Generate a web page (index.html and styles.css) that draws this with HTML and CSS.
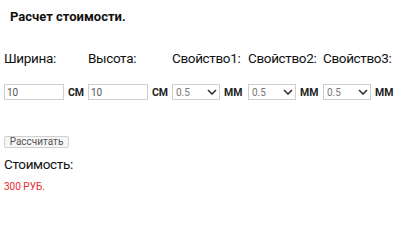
FILE: index.html
```html
<!DOCTYPE html>
<html lang="ru">
<head>
<meta charset="utf-8">
<link rel="stylesheet" href="styles.css">
</head>
<body>
<div class="page">
  <div class="title">Расчет стоимости.</div>
  <div class="calc">
    <div class="label">Ширина:</div>
    <div class="label">Высота:</div>
    <div class="label">Свойство1:</div>
    <div class="label">Свойство2:</div>
    <div class="label">Свойство3:</div>

    <div class="cell"><input class="num" type="text" value="10"><span class="unit">СМ</span></div>
    <div class="cell"><input class="num" type="text" value="10"><span class="unit">СМ</span></div>
    <div class="cell">
      <span class="sel-wrap"><select class="sel"><option>0.5</option></select><svg class="chev" width="10" height="6" viewBox="0 0 10 6"><polyline points="1,1 5,5 9,1" fill="none" stroke="#333" stroke-width="1.6"/></svg></span><span class="unit">ММ</span>
    </div>
    <div class="cell">
      <span class="sel-wrap"><select class="sel"><option>0.5</option></select><svg class="chev" width="10" height="6" viewBox="0 0 10 6"><polyline points="1,1 5,5 9,1" fill="none" stroke="#333" stroke-width="1.6"/></svg></span><span class="unit">ММ</span>
    </div>
    <div class="cell">
      <span class="sel-wrap"><select class="sel"><option>0.5</option></select><svg class="chev" width="10" height="6" viewBox="0 0 10 6"><polyline points="1,1 5,5 9,1" fill="none" stroke="#333" stroke-width="1.6"/></svg></span><span class="unit">ММ</span>
    </div>
  </div>
  <button class="btn" type="button">Рассчитать</button>
  <div class="cost-label">Стоимость:</div>
  <div class="cost">300 РУБ.</div>
</div>
</body>
</html>
```

FILE: styles.css
```css
html, body {
  margin: 0;
  padding: 0;
  background: #fff;
}
body {
  font-family: Roboto, "Liberation Sans", sans-serif;
  color: #111;
}
.page {
  padding: 9px 4px 0 4px;
  display: flex;
  flex-direction: column;
  align-items: flex-start;
}
.title {
  font-weight: bold;
  font-size: 13px;
  line-height: 15px;
  margin-left: 6px;
}
.calc {
  display: grid;
  grid-template-columns: 78px 78px 70px 69px auto;
  column-gap: 6px;
  margin-top: 26px;
}
.label {
  font-size: 13.5px;
  letter-spacing: -0.35px;
  line-height: 16px;
  white-space: nowrap;
}
.cell {
  margin-top: 18px;
  display: flex;
  align-items: center;
  height: 16px;
  white-space: nowrap;
}
.num {
  box-sizing: border-box;
  width: 60px;
  height: 16px;
  margin: 0;
  padding: 0 2px;
  border: 1px solid #cfcfcf;
  border-radius: 0;
  font-family: Roboto, "Liberation Sans", sans-serif;
  font-size: 10px;
  color: #555;
  outline: none;
}
.unit {
  font-weight: bold;
  font-size: 10.5px;
  margin-left: 4px;
  color: #222;
}
.sel-wrap {
  position: relative;
  display: inline-block;
  height: 16px;
}
.sel {
  -webkit-appearance: none;
  appearance: none;
  box-sizing: border-box;
  width: 48px;
  height: 16px;
  margin: 0;
  padding: 0 3px;
  border: 1px solid #cfcfcf;
  border-radius: 0;
  background: #fff;
  font-family: Roboto, "Liberation Sans", sans-serif;
  font-size: 10px;
  color: #777;
  display: block;
}
.chev {
  position: absolute;
  right: 3px;
  top: 5px;
  pointer-events: none;
}
.btn {
  margin-top: 36px;
  box-sizing: border-box;
  height: 12px;
  width: 65px;
  padding: 0;
  border: 1px solid #cfcfcf;
  border-radius: 2px;
  background: #f6f6f6;
  font-family: Roboto, "Liberation Sans", sans-serif;
  font-size: 10px;
  line-height: 10px;
  color: #555;
}
.cost-label {
  margin-top: 8px;
  font-size: 13.5px;
  letter-spacing: -0.35px;
  line-height: 16px;
}
.cost {
  margin-top: 9px;
  font-size: 10px;
  line-height: 12px;
  color: #e8282b;
}
```
